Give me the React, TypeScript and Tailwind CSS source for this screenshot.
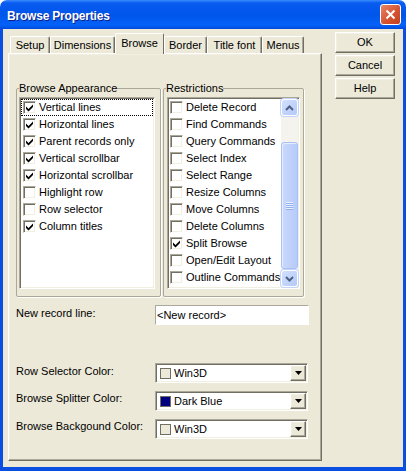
import React from 'react';

// classic 3D edges
const sunken =
  'border border-t-[#ACA899] border-l-[#ACA899] border-r-white border-b-white shadow-[inset_1px_1px_0_#716F64,inset_-1px_-1px_0_#F1EFE2]';
const raised =
  'border border-t-white border-l-white border-r-[#716F64] border-b-[#716F64] shadow-[inset_-1px_-1px_0_#ACA899,inset_1px_1px_0_#F1EFE2]';

const appearance: [string, boolean][] = [
  ['Vertical lines', true],
  ['Horizontal lines', true],
  ['Parent records only', true],
  ['Vertical scrollbar', true],
  ['Horizontal scrollbar', true],
  ['Highlight row', false],
  ['Row selector', false],
  ['Column titles', true],
];

const restrictions: [string, boolean][] = [
  ['Delete Record', false],
  ['Find Commands', false],
  ['Query Commands', false],
  ['Select Index', false],
  ['Select Range', false],
  ['Resize Columns', false],
  ['Move Columns', false],
  ['Delete Columns', false],
  ['Split Browse', true],
  ['Open/Edit Layout', false],
  ['Outline Commands', false],
];

const tabs: [string, number][] = [
  ['Setup', 40],
  ['Dimensions', 65],
  ['Browse', 49],
  ['Border', 43],
  ['Title font', 55],
  ['Menus', 42],
];

const Check = ({ on }: { on: boolean }) => (
  <span className={`w-[13px] h-[13px] shrink-0 bg-white flex items-center justify-center ${sunken}`}>
    {on && (
      <svg width="7" height="8" viewBox="0 0 7 8">
        <polygon points="0,2.5 2.5,5 7,0.5 7,3 2.5,7.5 0,5" fill="#000" />
      </svg>
    )}
  </span>
);

const Item = ({ label, on, focus, pad }: { label: string; on: boolean; focus?: boolean; pad: string }) => (
  <div
    className={`h-[17px] flex items-center gap-[3px] whitespace-nowrap border ${pad} ${
      focus ? 'border-dotted border-black' : 'border-transparent'
    }`}
  >
    <Check on={on} />
    <span>{label}</span>
  </div>
);

const Arrow = ({ up }: { up?: boolean }) => (
  <div className="w-[17px] h-[17px] rounded-[3px] border border-white bg-[linear-gradient(135deg,#D3E0FD,#B4C9F8)] shadow-[0_0_0_1px_#C3D3FD] flex items-center justify-center">
    <svg width="9" height="6" viewBox="0 0 9 6">
      <path d={up ? 'M1 5 L4.5 1.5 L8 5' : 'M1 1 L4.5 4.5 L8 1'} stroke="#4D6185" strokeWidth="2" fill="none" />
    </svg>
  </div>
);

const ScrollBar = () => (
  <div className="w-[17px] h-full flex flex-col bg-[#F4F3EE]">
    <Arrow up />
    <div className="h-[26px]" />
    <div className="h-[127px] rounded-[3px] border border-[#A9C0F5] bg-[linear-gradient(90deg,#C9D9FD,#B7CBF9)] shadow-[inset_1px_1px_0_#E6EEFE] flex flex-col items-center justify-center gap-[1px]">
      {[0, 1, 2, 3].map((i) => (
        <div key={i} className="w-[7px] h-[1px] bg-[#EEF4FE] shadow-[0_1px_0_#8DAEF5]" />
      ))}
    </div>
    <div className="flex-1" />
    <Arrow />
  </div>
);

const Group = ({ title, w, children }: { title: string; w: string; children: React.ReactNode }) => (
  <fieldset className={`${w} h-[215px] border border-[#ACA899] shadow-[1px_1px_0_#fff] rounded-[2px] pl-[2px]`}>
    <legend className="px-0 leading-[13px] text-black">{title}</legend>
    {children}
  </fieldset>
);

const DropBtn = () => (
  <div className={`w-[16px] h-[16px] ml-auto bg-[#ECE9D8] flex items-center justify-center ${raised}`}>
    <svg width="7" height="4" viewBox="0 0 7 4">
      <polygon points="0,0 7,0 3.5,4" fill="#000" />
    </svg>
  </div>
);

const Combo = ({ swatch, text }: { swatch: string; text: string }) => (
  <div className={`w-[153px] h-[20px] bg-white p-[1px] flex items-center ${sunken}`}>
    <span className={`ml-[3px] w-[11px] h-[11px] border border-[#716F64] ${swatch}`} />
    <span className="ml-[3px] text-black">{text}</span>
    <DropBtn />
  </div>
);

const Row = ({ label, children, top }: { label: string; children: React.ReactNode; top: string }) => (
  <div className="flex items-start">
    <span className={`w-[139px] leading-[13px] ${top}`}>{label}</span>
    {children}
  </div>
);

const Button = ({ children }: { children: React.ReactNode }) => (
  <div className={`w-[60px] h-[21px] bg-[#ECE9D8] flex items-center justify-center ${raised}`}>{children}</div>
);

export default function App() {
  return (
    <div className="w-[406px] h-[471px] flex flex-col overflow-hidden font-['Liberation_Sans',Arial,sans-serif] text-[11px] text-black select-none">
      {/* title bar */}
      <div className="h-[29px] shrink-0 rounded-t-[7px] bg-[linear-gradient(180deg,#3A8CFF_0%,#0A5CF0_10%,#0055EA_50%,#0462F8_86%,#0049DC_100%)] flex items-center pl-[7px] pr-[5px]">
        <span className="text-white font-bold text-[12px] tracking-[-0.2px] [text-shadow:1px_1px_0_#0F1F8A] pt-[2px]">
          Browse Properties
        </span>
        <div className="ml-auto w-[21px] h-[21px] rounded-[3px] border border-white bg-[linear-gradient(135deg,#E8866A,#D4502E_60%,#C2401F)] flex items-center justify-center">
          <svg width="11" height="11" viewBox="0 0 11 11">
            <path d="M1.5 1.5 L9.5 9.5 M9.5 1.5 L1.5 9.5" stroke="#fff" strokeWidth="2" />
          </svg>
        </div>
      </div>

      {/* frame */}
      <div className="flex-1 flex bg-[#0A4FE2] px-[3px] pb-[4px]">
        <div className="flex-1 flex bg-[#ECE9D8] pl-[5px] pt-[4px] pb-[6px]">
          {/* tab control */}
          <div className="w-[314px] flex flex-col">
            <div className="h-[20px] flex items-end pl-[2px]">
              {tabs.map(([t, w]) => {
                const sel = t === 'Browse';
                return (
                  <div
                    key={t}
                    style={{ width: w }}
                    className={`flex items-center justify-center border-t border-l border-r rounded-t-[2px] border-t-white border-l-white border-r-[#716F64] bg-[#ECE9D8] whitespace-nowrap ${
                      sel
                        ? 'h-[21px] -mb-[1px] relative z-10 pb-[1px]'
                        : 'h-[17px] shadow-[inset_-1px_0_0_#ACA899]'
                    }`}
                  >
                    {t}
                  </div>
                );
              })}
            </div>

            <div className={`flex-1 flex flex-col pl-[7px] pt-[28px] ${raised}`}>
              <div className="flex gap-[2px]">
                <Group title="Browse Appearance" w="w-[145px]">
                  <div className={`mt-[2px] w-[136px] h-[192px] bg-white p-[1px] ${sunken}`}>
                    {appearance.map(([l, on], i) => (
                      <Item key={l} label={l} on={on} focus={i === 0} pad="pl-[1px]" />
                    ))}
                  </div>
                </Group>
                <Group title="Restrictions" w="w-[141px]">
                  <div className={`mt-[2px] ml-[1px] w-[133px] h-[192px] bg-white p-[1px] flex ${sunken}`}>
                    <div className="flex-1 overflow-hidden">
                      {restrictions.map(([l, on]) => (
                        <Item key={l} label={l} on={on} pad="pl-0" />
                      ))}
                    </div>
                    <ScrollBar />
                  </div>
                </Group>
              </div>

              <div className="mt-[8px]">
                <Row label="New record line:" top="mt-[2px]">
                  <div className={`w-[154px] h-[20px] bg-white flex items-center pl-[1px] border border-t-[#ACA899] border-l-[#ACA899] border-r-white border-b-white`}>
                    &lt;New record&gt;
                  </div>
                </Row>
              </div>

              <div className="mt-[38px] flex flex-col gap-[8px]">
                <Row label="Row Selector Color:" top="mt-[2px]">
                  <Combo swatch="bg-[#ECE9D8]" text="Win3D" />
                </Row>
                <Row label="Browse Splitter Color:" top="mt-[1px]">
                  <Combo swatch="bg-[#000080]" text="Dark Blue" />
                </Row>
                <Row label="Browse Backgound Color:" top="mt-[1px]">
                  <Combo swatch="bg-[#ECE9D8]" text="Win3D" />
                </Row>
              </div>
            </div>
          </div>

          {/* buttons */}
          <div className="ml-[13px] flex flex-col gap-[2px] -mt-[1px]">
            <Button>OK</Button>
            <Button>Cancel</Button>
            <Button>Help</Button>
          </div>
        </div>
      </div>
    </div>
  );
}
